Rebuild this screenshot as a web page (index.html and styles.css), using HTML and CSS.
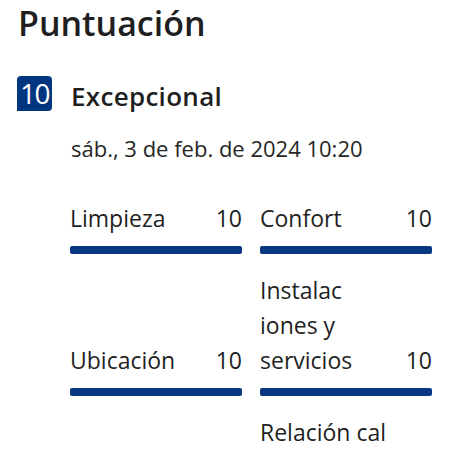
FILE: index.html
```html
<!DOCTYPE html>
<html lang="es">
<head>
    <meta charset="UTF-8">
    <meta name="viewport" content="width=device-width, initial-scale=1.0">
    <title>Puntuación</title>
    <link rel="stylesheet" href="styles.css">
</head>
<body>
    <div class="page">
        <h1 class="title">Puntuación</h1>
        <div class="score">
            <span class="badge">10</span>
            <span class="score_txt">Excepcional</span>
        </div>
        <div class="date">sáb., 3 de feb. de 2024 10:20</div>
        <!-- puntuaciones por categoria -->
        <ul class="grid">
            <li>
                <div class="row"><span class="lbl">Limpieza</span><span class="num">10</span></div>
                <div class="bar"></div>
            </li>
            <li>
                <div class="row"><span class="lbl">Confort</span><span class="num">10</span></div>
                <div class="bar"></div>
            </li>
            <li>
                <div class="row"><span class="lbl">Ubicación</span><span class="num">10</span></div>
                <div class="bar"></div>
            </li>
            <li>
                <div class="row"><span class="lbl">Instalac<br>iones y<br>servicios</span><span class="num">10</span></div>
                <div class="bar"></div>
            </li>
            <li></li>
            <li>
                <div class="row"><span class="lbl">Relación cal</span></div>
            </li>
        </ul>
    </div>
</body>
</html>
```
FILE: styles.css
```css
*{
    margin: 0;
    padding: 0;
}
body{
    font-family: "Open Sans", "Noto Sans", sans-serif;
    color: #1f1f1f;
    background: #fff;
    overflow: hidden;
}
.page{
    padding: 1px 18px 0 17px;
}
.title{
    margin-left: 1px;
    font-size: 34px;
    font-weight: 600;
    line-height: 44px;
}
.score{
    display: flex;
    align-items: flex-start;
    margin-top: 31px;
}
.badge{
    width: 35px;
    height: 35px;
    background-color: #003580;
    color: #fff;
    font-size: 28px;
    line-height: 35px;
    text-align: center;
    border-radius: 4px 4px 4px 0;
    letter-spacing: -1.5px;
}
.score_txt{
    margin-left: 19px;
    padding-top: 3px;
    font-size: 26px;
    line-height: 34px;
    font-weight: 600;
    letter-spacing: 0.3px;
}
.date{
    margin: 20px 0 0 54px;
    font-size: 22px;
    line-height: 30px;
    color: #262626;
}
.grid{
    list-style: none;
    margin: 38px 0 0 53px;
    display: grid;
    grid-template-columns: 172px 172px;
    column-gap: 18px;
    row-gap: 19px;
    align-items: end;
}
.row{
    display: flex;
    justify-content: space-between;
    align-items: flex-end;
    font-size: 23px;
    line-height: 35px;
    color: #1f1f1f;
}
.bar{
    height: 8px;
    margin-top: 10px;
    background-color: #0a3782;
    border-radius: 2px;
}
```
